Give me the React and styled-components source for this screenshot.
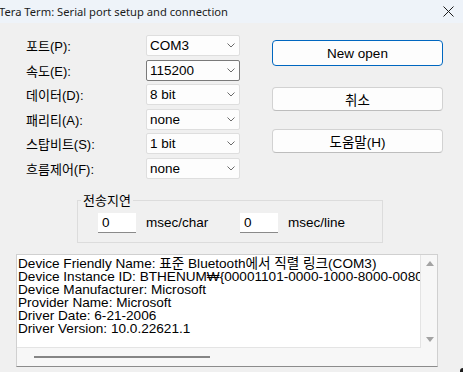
import React from "react";
import styled, { createGlobalStyle } from "styled-components";

const GlobalStyle = createGlobalStyle`
    html, body {
        margin: 0;
        padding: 0;
        background: #f0f0f0;
        overflow: hidden;
    }
    * {
        box-sizing: border-box;
    }
`;

const UI_FONT = `"Liberation Sans", "Noto Sans CJK KR", sans-serif`;

const Window = styled.div`
    position: relative;
    width: 463px;
    height: 372px;
    background: #f0f0f0;
    font-family: ${UI_FONT};
    font-size: 13px;
    color: #000;
    overflow: hidden;
`;

const TitleBar = styled.div`
    height: 23px;
    display: flex;
    align-items: center;
    justify-content: space-between;
    background: #eef3f9;
    padding-right: 9px;
`;

const Title = styled.span`
    font-family: "Noto Sans", sans-serif;
    font-size: 11.2px;
    color: #1b1b1b;
    margin-left: -1px;
    white-space: nowrap;
`;

const Content = styled.div`
    display: flex;
    flex-direction: column;
`;

const TopSection = styled.div`
    display: flex;
    margin-top: 12px;
    padding-left: 26px;
`;

const FieldGrid = styled.div`
    display: grid;
    grid-template-columns: 120px 94px;
    grid-auto-rows: 21px;
    row-gap: 3.6px;
`;

const Label = styled.label`
    display: flex;
    align-items: center;
    white-space: nowrap;
`;

const Combo = styled.div`
    display: flex;
    align-items: center;
    justify-content: space-between;
    background: #fdfdfd;
    border: 1px solid ${(p) => (p.$focused ? "#7a7a7a" : "#dedede")};
    border-radius: 2px;
    padding: 0 4px 0 3px;
    font-size: 13.5px;
`;

const ButtonColumn = styled.div`
    display: flex;
    flex-direction: column;
    margin-left: 32px;
`;

const Button = styled.button`
    font-family: ${UI_FONT};
    font-size: 13.5px;
    color: #000;
    background: #fdfdfd;
    width: 171px;
    height: ${(p) => (p.$primary ? "26px" : "24px")};
    margin-top: ${(p) => p.$top}px;
    border: 1px solid ${(p) => (p.$primary ? "#0067c0" : "#d2d2d2")};
    border-bottom-color: ${(p) => (p.$primary ? "#0067c0" : "#bdbdbd")};
    border-radius: 4px;
    padding: 0;
`;

const DelayGroup = styled.fieldset`
    margin: 14px 0 0 77px;
    width: 304px;
    height: 50px;
    padding: 4px 0 0 20px;
    border: 1px solid #dcdcdc;
    border-radius: 0;
`;

const Legend = styled.legend`
    padding: 0 2px;
    margin-left: -17px;
    line-height: 16px;
    font-size: 13px;
`;

const DelayRow = styled.div`
    display: flex;
    align-items: center;
    font-size: 13.5px;
`;

const NumberBox = styled.div`
    width: 38px;
    height: 20px;
    background: #fff;
    border-bottom: 1px solid #8a8a8a;
    padding: 2px 0 0 4px;
    line-height: 16px;
`;

const Unit = styled.span`
    margin-left: 10px;
    width: 94px;
`;

const InfoBox = styled.div`
    margin: 11px 0 0 16px;
    width: 422px;
    height: 113px;
    display: grid;
    grid-template-columns: 404px 16px;
    grid-template-rows: 93px 18px;
    border: 1px solid #d0d0d0;
    border-bottom-color: #8c8c8c;
    background: #f7f7f7;
`;

const InfoText = styled.div`
    grid-column: 1;
    grid-row: 1;
    background: #fff;
    border-right: 1px solid #e4e4e4;
    border-bottom: 1px solid #e4e4e4;
    padding: 2px 0 0 1px;
    font-size: 13.6px;
    line-height: 13px;
    white-space: pre;
    overflow: hidden;
`;

const VScroll = styled.div`
    grid-column: 2;
    grid-row: 1 / 3;
    display: flex;
    flex-direction: column;
    justify-content: space-between;
    align-items: center;
    padding: 6px 0 24px 1px;
`;

const HScroll = styled.div`
    grid-column: 1;
    grid-row: 2;
    display: flex;
    align-items: center;
    padding-left: 17px;
`;

const Thumb = styled.div`
    width: 176px;
    height: 2px;
    background: #858585;
`;

const CornerMark = styled.div`
    position: absolute;
    right: 0;
    bottom: 0;
    width: 3px;
    height: 4px;
    background: #1d1d1d;
    border-top-left-radius: 3px;
`;

const Chevron = () => (
    <svg width="8" height="5" viewBox="0 0 8 5">
        <path d="M0.5 0.5 L4 4 L7.5 0.5" fill="none" stroke="#6b6b6b" strokeWidth="1" />
    </svg>
);

const Arrow = ({ down }) => (
    <svg width="8" height="5" viewBox="0 0 8 5">
        <path d={down ? "M0 0 H8 L4 5 Z" : "M0 5 H8 L4 0 Z"} fill="#a3a3a3" />
    </svg>
);

const CloseIcon = () => (
    <svg width="11" height="11" viewBox="0 0 11 11">
        <path d="M0.5 0.5 L10.5 10.5 M10.5 0.5 L0.5 10.5" stroke="#1b1b1b" strokeWidth="1" />
    </svg>
);

const fields = [
    { label: "포트(P):", value: "COM3" },
    { label: "속도(E):", value: "115200", focused: true },
    { label: "데이터(D):", value: "8 bit" },
    { label: "패리티(A):", value: "none" },
    { label: "스탑비트(S):", value: "1 bit" },
    { label: "흐름제어(F):", value: "none" },
];

const info = [
    "Device Friendly Name: 표준 Bluetooth에서 직렬 링크(COM3)",
    "Device Instance ID: BTHENUM₩{00001101-0000-1000-8000-00805F9B34FB}",
    "Device Manufacturer: Microsoft",
    "Provider Name: Microsoft",
    "Driver Date: 6-21-2006",
    "Driver Version: 10.0.22621.1",
].join("\n");

export default function App() {
    return (
        <Window>
            <GlobalStyle />
            <TitleBar>
                <Title>Tera Term: Serial port setup and connection</Title>
                <CloseIcon />
            </TitleBar>
            <Content>
                <TopSection>
                    <FieldGrid>
                        {fields.map((f) => (
                            <React.Fragment key={f.label}>
                                <Label>{f.label}</Label>
                                <Combo $focused={f.focused}>
                                    <span>{f.value}</span>
                                    <Chevron />
                                </Combo>
                            </React.Fragment>
                        ))}
                    </FieldGrid>
                    <ButtonColumn>
                        <Button $primary $top={5}>New open</Button>
                        <Button $top={21}>취소</Button>
                        <Button $top={18}>도움말(H)</Button>
                    </ButtonColumn>
                </TopSection>
                <DelayGroup>
                    <Legend>전송지연</Legend>
                    <DelayRow>
                        <NumberBox>0</NumberBox>
                        <Unit>msec/char</Unit>
                        <NumberBox>0</NumberBox>
                        <Unit>msec/line</Unit>
                    </DelayRow>
                </DelayGroup>
                <InfoBox>
                    <InfoText>{info}</InfoText>
                    <VScroll>
                        <Arrow />
                        <Arrow down />
                    </VScroll>
                    <HScroll>
                        <Thumb />
                    </HScroll>
                </InfoBox>
            </Content>
            <CornerMark />
        </Window>
    );
}
